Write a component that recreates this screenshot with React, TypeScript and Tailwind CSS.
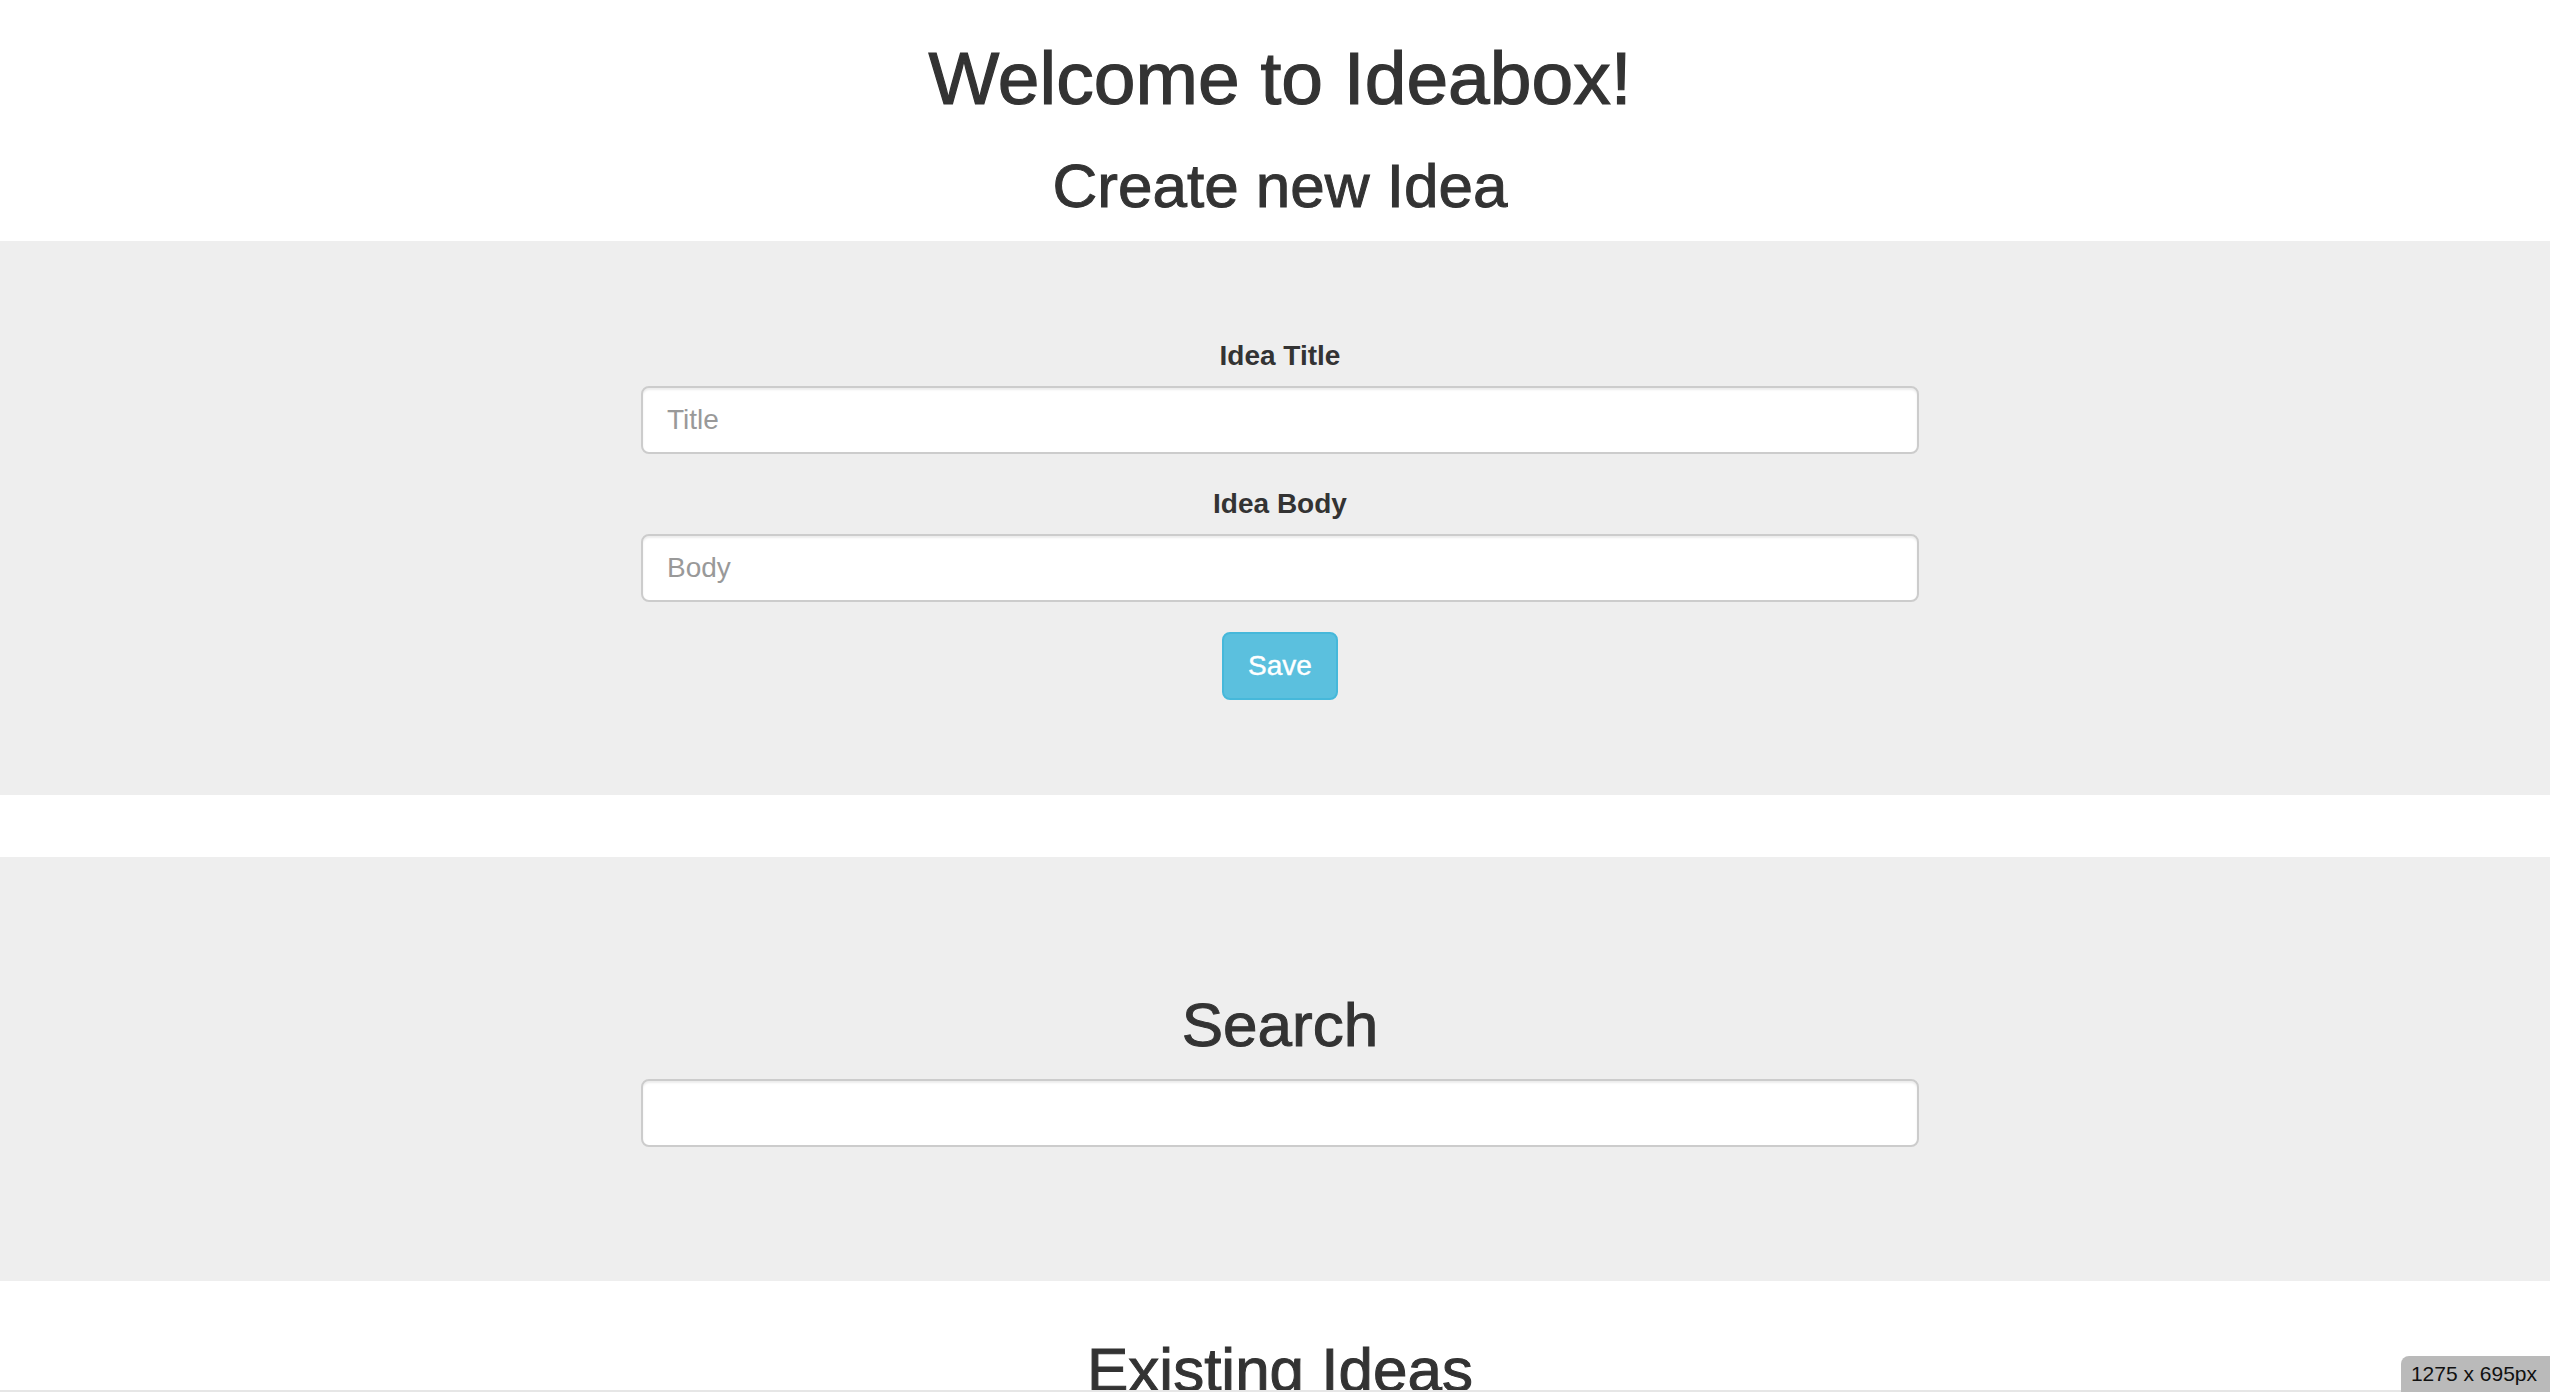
import { useState } from "react";

function Field({ label, placeholder }: { label: string; placeholder: string }) {
  return (
    <div className="mb-[30px] flex flex-col items-center">
      <label className="mb-[10px] text-[28px] font-bold leading-[40px]">{label}</label>
      <input
        type="text"
        placeholder={placeholder}
        className="h-[68px] w-full rounded-[8px] border-2 border-[#cccccc] bg-white px-[24px] text-[28px] text-[#555555] shadow-[inset_0_2px_2px_rgba(0,0,0,0.075)] outline-none placeholder:text-[#999999]"
      />
    </div>
  );
}

export default function App() {
  const [search, setSearch] = useState("");

  return (
    <div className="relative flex h-[1392px] flex-col overflow-hidden bg-white text-[#333333] [font-family:'Liberation_Sans',Arial,sans-serif]">
      <main className="flex-1 overflow-hidden">
        <h1 className="mt-[38px] pl-[10px] text-center text-[75px] leading-[80px] [-webkit-text-stroke:1.2px_#333333]">
          Welcome to Ideabox!
        </h1>
        <h2 className="mt-[34px] mb-[21px] pl-[10px] text-center text-[62px] leading-[68px] [-webkit-text-stroke:1px_#333333]">
          Create new Idea
        </h2>

        <section className="bg-[#eeeeee] pt-[95px] pb-[95px]">
          <form className="mx-auto w-[1278px] translate-x-[5px]" onSubmit={(e) => e.preventDefault()}>
            <Field label="Idea Title" placeholder="Title" />
            <Field label="Idea Body" placeholder="Body" />
            <div className="flex justify-center">
              <button
                type="submit"
                className="h-[68px] rounded-[8px] border-2 border-[#46b8da] bg-[#5bc0de] px-[24px] text-[28px] leading-[40px] text-white [-webkit-text-stroke:0.4px_#ffffff]"
              >
                Save
              </button>
            </div>
          </form>
        </section>

        <section className="mt-[62px] bg-[#eeeeee] py-[95px]">
          <div className="mx-auto w-[1278px] translate-x-[5px]">
            <h2 className="mt-[39px] mb-[20px] text-center text-[62px] leading-[68px] [-webkit-text-stroke:1px_#333333]">
              Search
            </h2>
            <input
              type="text"
              value={search}
              onChange={(e) => setSearch(e.target.value)}
              className="mb-[39px] h-[68px] w-full rounded-[8px] border-2 border-[#cccccc] bg-white px-[24px] text-[28px] text-[#555555] shadow-[inset_0_2px_2px_rgba(0,0,0,0.075)] outline-none"
            />
          </div>
        </section>

        <h2 className="mt-[55px] pl-[10px] text-center text-[62px] leading-[68px] [-webkit-text-stroke:1px_#333333]">
          Existing Ideas
        </h2>
      </main>
      <div className="h-[2px] bg-[#e6e6e6]" />

      <div className="absolute right-0 bottom-0 rounded-tl-[8px] bg-[#bababa] py-[4px] pr-[13px] pl-[10px] text-[21px] leading-[28px] text-[#111111]">
        1275 x 695px
      </div>
    </div>
  );
}
